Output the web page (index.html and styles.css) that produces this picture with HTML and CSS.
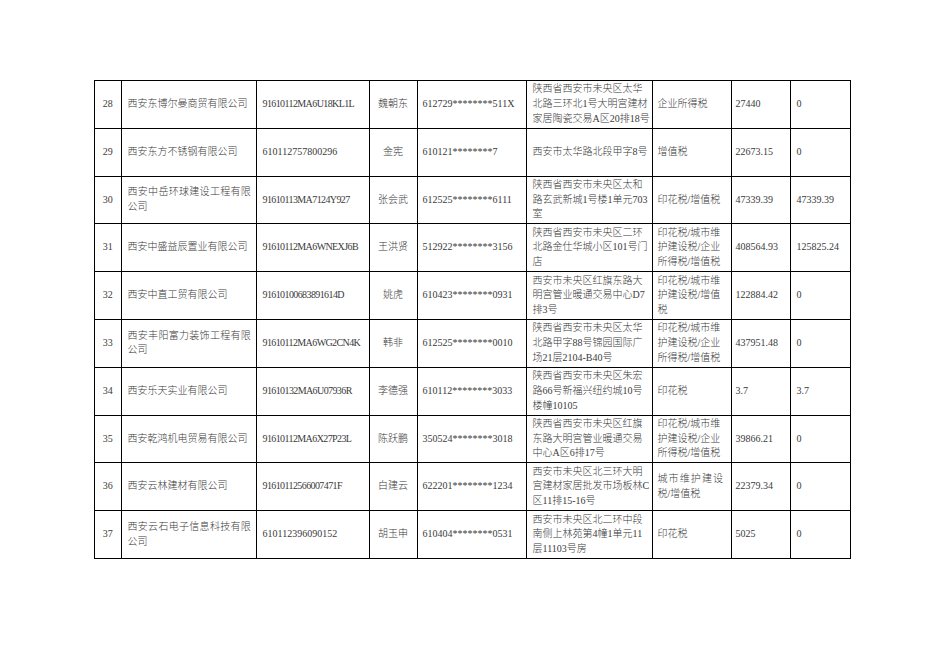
FILE: index.html
```html
<!DOCTYPE html>
<html lang="zh-CN">
<head>
<meta charset="utf-8">
<title>欠税公告</title>
<link rel="stylesheet" href="styles.css">
</head>
<body>
<div class="page">
<table class="grid">
<colgroup>
<col class="c1"><col class="c2"><col class="c3"><col class="c4"><col class="c5"><col class="c6"><col class="c7"><col class="c8"><col class="c9">
</colgroup>
<tbody>
<tr>
<td class="no">28</td><td>西安东博尔曼商贸有限公司</td><td class="code">91610112MA6U18KL1L</td><td class="name">魏朝东</td><td class="pid">612729********511X</td>
<td class="addr">陕西省西安市未央区太华<br>北路三环北1号大明宫建材<br>家居陶瓷交易A区20排18号</td><td class="tax">企业所得税</td><td class="amt">27440</td><td class="bal">0</td>
</tr>
<tr>
<td class="no">29</td><td>西安东方不锈钢有限公司</td><td>610112757800296</td><td class="name">金宪</td><td class="pid">610121********7</td>
<td class="addr">西安市太华路北段甲字8号</td><td class="tax">增值税</td><td class="amt">22673.15</td><td class="bal">0</td>
</tr>
<tr>
<td class="no">30</td><td><span class="sp">西安中岳环球建设工程有限</span><br>公司</td><td class="code">91610113MA7124Y927</td><td class="name">张会武</td><td class="pid">612525********6111</td>
<td class="addr">陕西省西安市未央区太和<br>路玄武新城1号楼1单元703<br>室</td><td class="tax">印花税/增值税</td><td class="amt">47339.39</td><td class="bal">47339.39</td>
</tr>
<tr>
<td class="no">31</td><td>西安中盛益辰置业有限公司</td><td class="code">91610112MA6WNEXJ6B</td><td class="name">王洪贤</td><td class="pid">512922********3156</td>
<td class="addr">陕西省西安市未央区二环<br>北路金仕华城小区101号门<br>店</td><td class="tax">印花税/城市维<br>护建设税/企业<br>所得税/增值税</td><td class="amt">408564.93</td><td class="bal">125825.24</td>
</tr>
<tr>
<td class="no">32</td><td>西安中直工贸有限公司</td><td class="code">91610100683891614D</td><td class="name">姚虎</td><td class="pid">610423********0931</td>
<td class="addr">西安市未央区红旗东路大<br>明宫管业暖通交易中心D7<br>排3号</td><td class="tax">印花税/城市维<br>护建设税/增值<br>税</td><td class="amt">122884.42</td><td class="bal">0</td>
</tr>
<tr>
<td class="no">33</td><td><span class="sp">西安丰阳富力装饰工程有限</span><br>公司</td><td class="code">91610112MA6WG2CN4K</td><td class="name">韩非</td><td class="pid">612525********0010</td>
<td class="addr">陕西省西安市未央区太华<br>北路甲字88号锦园国际广<br>场21层2104-B40号</td><td class="tax">印花税/城市维<br>护建设税/企业<br>所得税/增值税</td><td class="amt">437951.48</td><td class="bal">0</td>
</tr>
<tr>
<td class="no">34</td><td>西安乐天实业有限公司</td><td class="code">91610132MA6U07936R</td><td class="name">李德强</td><td class="pid">610112********3033</td>
<td class="addr">陕西省西安市未央区朱宏<br>路66号新福兴纽约城10号<br>楼幢10105</td><td class="tax">印花税</td><td class="amt">3.7</td><td class="bal">3.7</td>
</tr>
<tr>
<td class="no">35</td><td>西安乾鸿机电贸易有限公司</td><td class="code">91610112MA6X27P23L</td><td class="name">陈跃鹏</td><td class="pid">350524********3018</td>
<td class="addr">陕西省西安市未央区红旗<br>东路大明宫管业暖通交易<br>中心A区6排17号</td><td class="tax">印花税/城市维<br>护建设税/企业<br>所得税/增值税</td><td class="amt">39866.21</td><td class="bal">0</td>
</tr>
<tr>
<td class="no">36</td><td>西安云林建材有限公司</td><td class="code">91610112566007471F</td><td class="name">白建云</td><td class="pid">622201********1234</td>
<td class="addr">西安市未央区北三环大明<br>宫建材家居批发市场板林C<br>区11排15-16号</td><td class="tax"><span class="wide">城市维护建设</span><br>税/增值税</td><td class="amt">22379.34</td><td class="bal">0</td>
</tr>
<tr>
<td class="no">37</td><td><span class="sp">西安云石电子信息科技有限</span><br>公司</td><td>610112396090152</td><td class="name">胡玉申</td><td class="pid">610404********0531</td>
<td class="addr">西安市未央区北二环中段<br>南侧上林苑第4幢1单元11<br>层11103号房</td><td class="tax">印花税</td><td class="amt">5025</td><td class="bal">0</td>
</tr>
</tbody>
</table>
</div>
</body>
</html>
```

FILE: styles.css
```css
html, body {
  margin: 0;
  padding: 0;
  background: #fff;
}

body {
  font-family: "Liberation Serif", "Noto Sans CJK SC", serif;
  font-size: 10px;
  font-weight: 300;
  color: #3a3a3a;
}

.page {
  padding: 80px 0 0 94px;
}

.grid {
  border-collapse: collapse;
  table-layout: fixed;
  width: 756px;
}

.c1 { width: 26.5px; }
.c2 { width: 135px; }
.c3 { width: 113px; }
.c4 { width: 48px; }
.c5 { width: 109px; }
.c6 { width: 126px; }
.c7 { width: 79px; }
.c8 { width: 59px; }
.c9 { width: 60.5px; }

.grid tr {
  height: 47.8px;
}

.grid td {
  border: 1px solid #000;
  padding: 0 4px 0 6px;
  line-height: 14.7px;
  vertical-align: middle;
  text-align: left;
  white-space: nowrap;
  overflow: visible;
}

.grid td.no {
  text-align: center;
  padding: 0;
}

.grid td.code {
  letter-spacing: -0.6px;
}

.grid td.name {
  text-align: center;
  padding: 0;
}

.grid td.pid {
  padding-left: 5px;
}

.grid td.addr {
  padding-left: 6px;
  padding-right: 0;
}

.grid td.tax {
  padding-left: 5px;
  padding-right: 0;
}

.grid td.amt {
  padding-left: 4px;
}

.grid td.bal {
  padding-left: 6px;
}

.sp {
  letter-spacing: 0.3px;
}

.wide {
  letter-spacing: 1.1px;
}
```
